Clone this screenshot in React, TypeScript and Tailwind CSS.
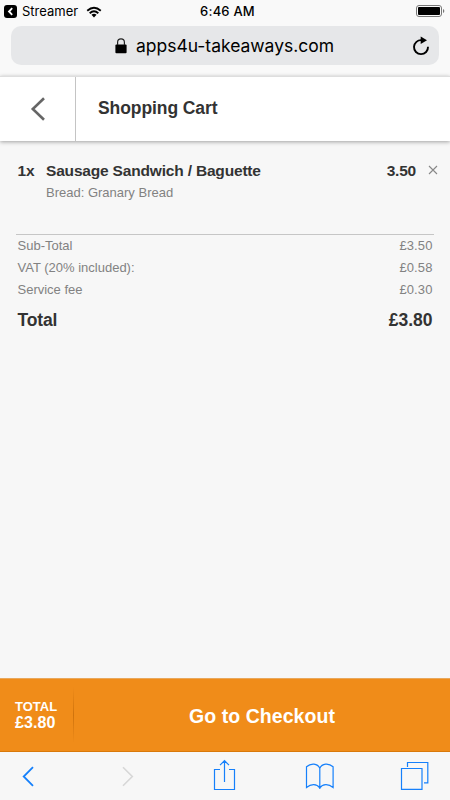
import React from "react";

const totals = [
  { label: "Sub-Total", value: "£3.50" },
  { label: "VAT (20% included):", value: "£0.58" },
  { label: "Service fee", value: "£0.30" },
];

function StatusBar() {
  return (
    <div className="flex h-[26px] pl-1 pr-[5px] text-black">
      <div className="flex h-[23px] flex-1 items-center">
        <svg width="13" height="13" viewBox="0 0 13 13">
          <rect width="13" height="13" rx="3" fill="#000" />
          <path d="M8.2 3.2 5 6.5l3.2 3.3" fill="none" stroke="#fff" strokeWidth="1.8" />
        </svg>
        <span className="ml-[5px] text-[13px]">Streamer</span>
        <svg className="ml-[8px]" width="16" height="12" viewBox="0 0 17 12">
          <g fill="none" stroke="#000" strokeWidth="2">
            <path d="M1.3 4.6Q8.5-1.8 15.7 4.6" />
            <path d="M3.9 7.3Q8.5 3.2 13.1 7.3" />
          </g>
          <path d="M5.8 9Q8.5 6.8 11.2 9L8.5 11.8Z" />
        </svg>
      </div>
      <div className="h-[23px] pl-[6px] text-[13px] leading-[23px] font-medium tracking-[0.2px]">6:46 AM</div>
      <div className="flex h-[22px] flex-1 items-center justify-end">
        <svg width="29" height="12" viewBox="0 0 29 12">
          <rect x="0.5" y="0.5" width="25" height="11" rx="2.5" fill="none" stroke="#777" />
          <rect x="2" y="2" width="22" height="8" rx="1" />
          <path d="M27 4v4q1.3-.5 1.3-2T27 4Z" fill="#777" />
        </svg>
      </div>
    </div>
  );
}

function AddressBar() {
  return (
    <div className="h-[50px] px-[11px]">
      <div className="flex h-[39px] items-center rounded-[10px] bg-[#e6e7e9] pl-[104px] pr-[9px]">
        <svg width="12" height="16" viewBox="0 0 12 16">
          <rect x="0.4" y="6.6" width="11.2" height="8.6" rx="1" />
          <path d="M2.6 7V4.2a3.4 3.4 0 0 1 6.8 0V7" fill="none" stroke="#222" strokeWidth="1.2" />
        </svg>
        <span className="ml-[9px] pt-[2px] text-[17.5px] tracking-[-0.02px] text-black">apps4u-takeaways.com</span>
        <svg className="ml-auto" width="18" height="20" viewBox="0 0 18 20">
          <path d="M9.7 4.2A7 7 0 1 0 16 10.8" fill="none" stroke="#000" strokeWidth="1.9" />
          <path d="M8.7.5 15 4.2 8.7 8Z" />
        </svg>
      </div>
    </div>
  );
}

function Header() {
  return (
    <header className="relative z-10 flex h-[65px] border-t border-[#dedede] bg-white shadow-[0_1px_4px_rgba(0,0,0,0.35)]">
      <button className="flex w-[76px] items-center border-r border-[#c4c4c4] pl-[30px]">
        <svg width="16" height="24" viewBox="0 0 16 24">
          <path d="M14 1.2 2.8 12 14 22.8" fill="none" stroke="#666" strokeWidth="2.6" />
        </svg>
      </button>
      <h1 className="pl-[22px] text-[17.5px] leading-[63px] font-bold tracking-[-0.08px]">Shopping Cart</h1>
    </header>
  );
}

function Cart() {
  return (
    <main className="h-[537px] bg-[#f7f7f7] px-4">
      <div className="flex h-[93px] pt-[20px] text-[15.5px] leading-5 font-bold">
        <span className="w-[30px] pl-[1.5px] tracking-[-0.2px]">1x</span>
        <div className="flex-1">
          <div className="tracking-[-0.18px]">Sausage Sandwich / Baguette</div>
          <div className="mt-[2px] text-[13px] font-normal text-[#828282]">Bread: Granary Bread</div>
        </div>
        <span className="tracking-[-0.2px]">3.50</span>
        <svg className="mt-[4px] ml-[12px] -mr-[4px]" width="10" height="10" viewBox="0 0 10 10">
          <path d="m1 1 8 8M9 1 1 9" stroke="#888" strokeWidth="1.1" />
        </svg>
      </div>
      <div className="border-t border-[#c6c6c6] pr-[1.5px] pl-[1.5px] text-[13px] leading-[22px] text-[#828282]">
        {totals.map((row) => (
          <div key={row.label} className="flex justify-between">
            <span>{row.label}</span>
            <span className="tracking-[0.1px]">{row.value}</span>
          </div>
        ))}
        <div className="flex justify-between pt-[8px] text-[17.5px] font-bold text-[#333]">
          <span className="tracking-[-0.15px]">Total</span>
          <span>£3.80</span>
        </div>
      </div>
    </main>
  );
}

function CheckoutBar() {
  return (
    <div className="flex h-[74px] items-center border-t border-b border-t-[#e9a85c] border-b-[#d9790b] bg-[#f08c19] font-bold text-white">
      <div className="w-[73px] pl-[15px] leading-[16px]">
        <div className="text-[13px]">TOTAL</div>
        <div className="text-[16px] tracking-[0.1px]">£3.80</div>
      </div>
      <div className="h-[56px] w-px bg-linear-to-b from-[#f08c19] via-[#cf730c] to-[#f08c19]" />
      <button className="flex-1 pt-[3px] text-center text-[19.5px] tracking-[0.05px]">Go to Checkout</button>
    </div>
  );
}

function Toolbar() {
  return (
    <nav className="h-12 bg-[#f7f7f7]">
      <svg width="450" height="48" viewBox="0 0 450 48" fill="none" stroke="#1680fb" strokeWidth="1.2">
        <path d="m33 15.2-9.3 9.3 9.3 9.3" strokeWidth="1.8" />
        <path d="m123 15.2 9.3 9.3-9.3 9.3" stroke="#d7d7d7" strokeWidth="1.6" />
        <path d="M220 17.5h-5.5v20h20v-20H229M224.5 30V9M220 13.2l4.5-4.5 4.5 4.5" />
        <path d="M319.8 16.2c-2.2-5-8.8-5.5-13.3-1.5v20.8c4.6-3.8 10.3-3.8 13.3.5 3-4.3 8.7-4.3 13.3-.5V14.7c-4.5-4-11.1-3.5-13.3 1.5v20.8" />
        <path d="M401.5 16.5h20.5v20.8h-20.5zM407.5 15v-4.5h20.3v20.3H424" />
      </svg>
    </nav>
  );
}

export default function App() {
  return (
    <div className="flex h-[800px] w-[450px] flex-col overflow-hidden bg-[#f9f9f9] font-['Liberation_Sans',Arial,sans-serif] text-[#333]">
      <div className="font-[Inter,sans-serif]">
        <StatusBar />
        <AddressBar />
      </div>
      <Header />
      <Cart />
      <CheckoutBar />
      <Toolbar />
    </div>
  );
}
